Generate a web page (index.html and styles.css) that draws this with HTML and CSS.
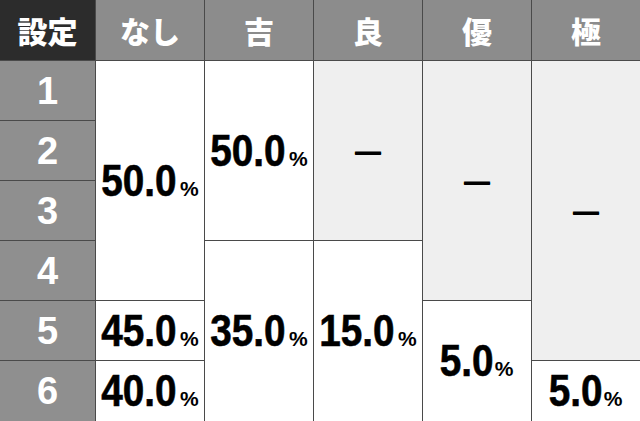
FILE: index.html
```html
<!DOCTYPE html>
<html lang="ja">
<head>
<meta charset="utf-8">
<link rel="stylesheet" href="styles.css">
</head>
<body>
<div class="table">
  <div class="cell head head-dark">設定</div>
  <div class="cell head">なし</div>
  <div class="cell head">吉</div>
  <div class="cell head">良</div>
  <div class="cell head">優</div>
  <div class="cell head">極</div>

  <div class="cell num r1">1</div>
  <div class="cell num r2">2</div>
  <div class="cell num r3">3</div>
  <div class="cell num r4">4</div>
  <div class="cell num r5">5</div>
  <div class="cell num r6">6</div>

  <div class="cell val nashi-a"><span class="n">50.0</span><span class="pct">%</span></div>
  <div class="cell val nashi-b"><span class="n">45.0</span><span class="pct">%</span></div>
  <div class="cell val nashi-c"><span class="n">40.0</span><span class="pct">%</span></div>

  <div class="cell val kichi-a"><span class="n">50.0</span><span class="pct">%</span></div>
  <div class="cell val kichi-b"><span class="n">35.0</span><span class="pct">%</span></div>

  <div class="cell none ryo-a"><span class="dash">—</span></div>
  <div class="cell val ryo-b"><span class="n">15.0</span><span class="pct">%</span></div>

  <div class="cell none yu-a"><span class="dash">—</span></div>
  <div class="cell val yu-b"><span class="n">5.0</span><span class="pct">%</span></div>

  <div class="cell none kiwami-a"><span class="dash">—</span></div>
  <div class="cell val kiwami-b"><span class="n">5.0</span><span class="pct">%</span></div>
</div>
</body>
</html>
```
FILE: styles.css
```css
html, body {
  margin: 0;
  padding: 0;
  background: #ffffff;
}

.table {
  width: 640px;
  height: 421px;
  display: grid;
  grid-template-columns: 95px repeat(5, 1fr);
  grid-template-rows: 60px repeat(5, 59px) 60px;
  gap: 1px;
  background: #4a4a4a;
}

.cell {
  display: flex;
  align-items: center;
  justify-content: center;
  min-width: 0;
}

.head {
  background: #8c8c8c;
  color: #ffffff;
  font-family: "Noto Sans CJK JP", sans-serif;
  font-weight: 900;
  font-size: 30px;
  line-height: 1;
}

.head-dark {
  background: #2c2c2c;
}

.num {
  grid-column: 1;
  background: #8f8f8f;
  color: #ffffff;
  font-family: "Liberation Sans", Arial, sans-serif;
  font-weight: 700;
  font-size: 38px;
  line-height: 1;
}

.r1 { grid-row: 2; }
.r2 { grid-row: 3; }
.r3 { grid-row: 4; }
.r4 { grid-row: 5; }
.r5 { grid-row: 6; }
.r6 { grid-row: 7; }

.val {
  background: #ffffff;
  color: #000000;
  font-family: "Liberation Sans", Arial, sans-serif;
  font-weight: 700;
  line-height: 1;
  align-items: baseline;
  align-content: center;
  flex-wrap: wrap;
}

.n {
  display: inline-block;
  font-size: 44px;
  transform: scaleX(0.88);
  margin: 0 -5px;
  -webkit-text-stroke: 0.6px #000000;
}

.pct {
  font-size: 21px;
  font-weight: 700;
  margin-left: 3px;
}

.none {
  background: #efefef;
}

.dash {
  font-family: "Liberation Sans", Arial, sans-serif;
  font-weight: 700;
  font-size: 26px;
  line-height: 1;
  color: #000000;
  text-shadow: 0 1px 0 #000000;
}

.nashi-a { grid-column: 2; grid-row: 2 / span 4; }
.nashi-b { grid-column: 2; grid-row: 6; }
.nashi-c { grid-column: 2; grid-row: 7; }

.kichi-a { grid-column: 3; grid-row: 2 / span 3; }
.kichi-b { grid-column: 3; grid-row: 5 / span 3; }

.ryo-a { grid-column: 4; grid-row: 2 / span 3; }
.ryo-b { grid-column: 4; grid-row: 5 / span 3; }

.yu-a { grid-column: 5; grid-row: 2 / span 4; }
.yu-b { grid-column: 5; grid-row: 6 / span 2; }

.kiwami-a { grid-column: 6; grid-row: 2 / span 5; }
.kiwami-b { grid-column: 6; grid-row: 7; }
```
